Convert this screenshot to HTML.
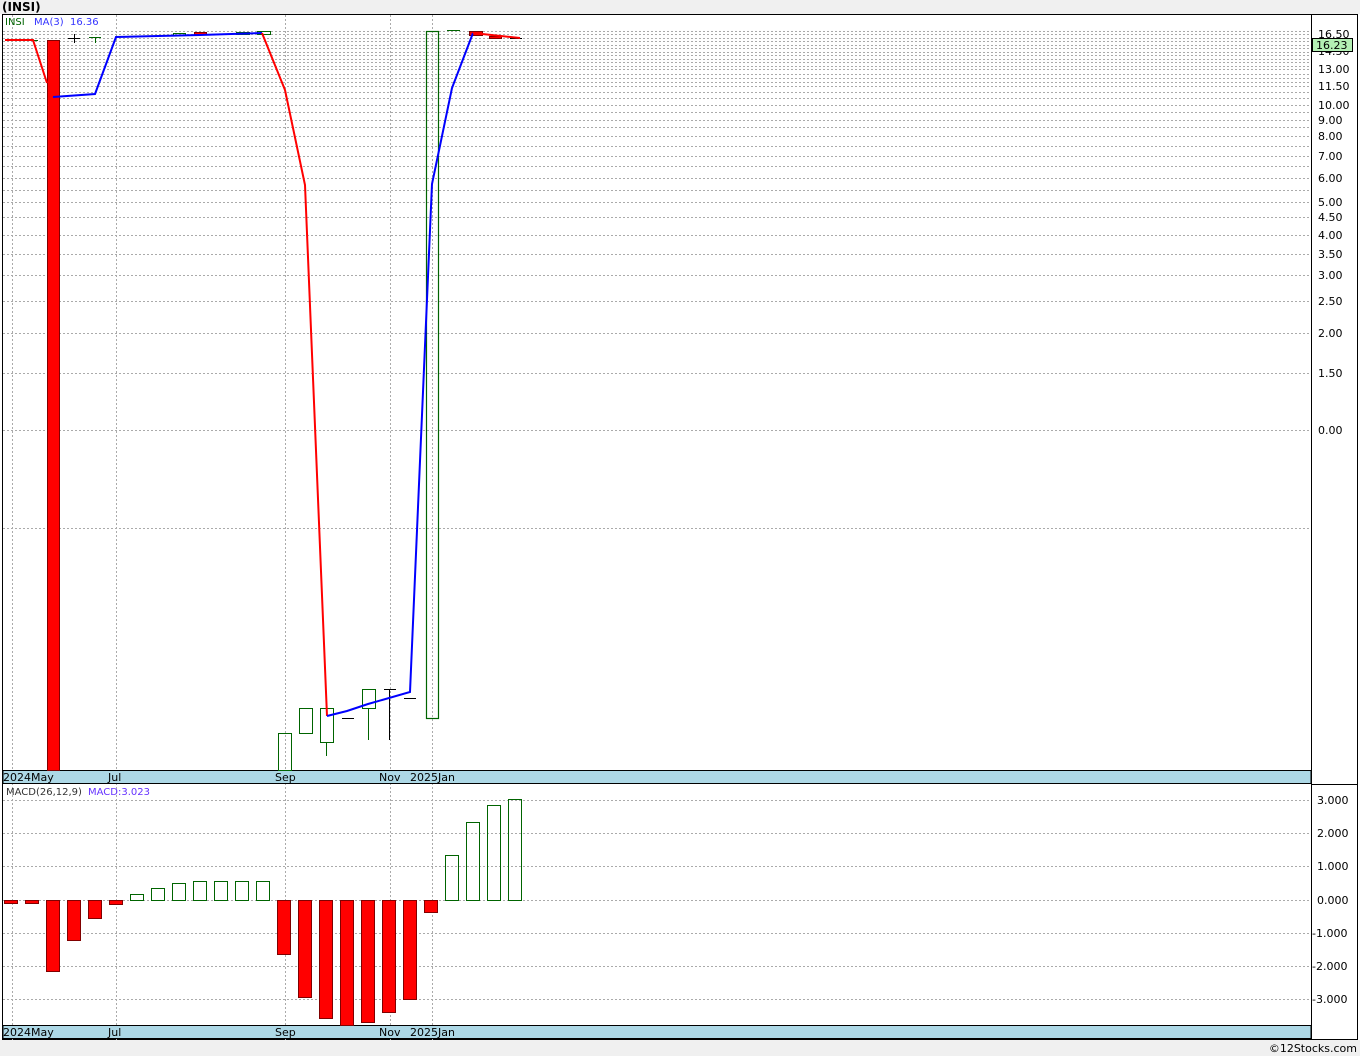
<!DOCTYPE html>
<html><head><meta charset="utf-8"><style>
html,body{margin:0;padding:0;background:#fff;width:1360px;height:1056px;overflow:hidden}
svg{display:block;font-family:"DejaVu Sans","Liberation Sans",sans-serif}
</style></head><body>
<svg width="1360" height="1056" viewBox="0 0 1360 1056" xmlns="http://www.w3.org/2000/svg">
<rect x="0" y="0" width="1360" height="1056" fill="#fff"/>
<rect x="0" y="0" width="1360" height="14" fill="#f0f0f0"/>
<text x="2" y="11" font-size="12" font-weight="bold" fill="#000">(INSI)</text>
<rect x="0" y="1040" width="1360" height="16" fill="#f0f0f0"/>
<text x="1357" y="1052" font-size="11" fill="#000" text-anchor="end">©12Stocks.com</text>
<rect x="2.5" y="14.5" width="1355" height="1025" fill="none" stroke="#000"/>
<line x1="1311.5" y1="14" x2="1311.5" y2="1040" stroke="#000"/>
<g stroke="#aaa" stroke-dasharray="2,2" stroke-width="1">
<line x1="3" x2="1311" y1="31.5" y2="31.5"/><line x1="3" x2="1311" y1="34.5" y2="34.5"/><line x1="3" x2="1311" y1="38.5" y2="38.5"/><line x1="3" x2="1311" y1="41.5" y2="41.5"/><line x1="3" x2="1311" y1="45.5" y2="45.5"/><line x1="3" x2="1311" y1="48.5" y2="48.5"/><line x1="3" x2="1311" y1="52.5" y2="52.5"/><line x1="3" x2="1311" y1="55.5" y2="55.5"/><line x1="3" x2="1311" y1="59.5" y2="59.5"/><line x1="3" x2="1311" y1="62.5" y2="62.5"/><line x1="3" x2="1311" y1="66.5" y2="66.5"/><line x1="3" x2="1311" y1="69.5" y2="69.5"/><line x1="3" x2="1311" y1="74.5" y2="74.5"/><line x1="3" x2="1311" y1="78.5" y2="78.5"/><line x1="3" x2="1311" y1="82.5" y2="82.5"/><line x1="3" x2="1311" y1="86.5" y2="86.5"/><line x1="3" x2="1311" y1="92.5" y2="92.5"/><line x1="3" x2="1311" y1="98.5" y2="98.5"/><line x1="3" x2="1311" y1="105.5" y2="105.5"/><line x1="3" x2="1311" y1="112.5" y2="112.5"/><line x1="3" x2="1311" y1="120.5" y2="120.5"/><line x1="3" x2="1311" y1="127.5" y2="127.5"/><line x1="3" x2="1311" y1="136.5" y2="136.5"/><line x1="3" x2="1311" y1="146.5" y2="146.5"/><line x1="3" x2="1311" y1="156.5" y2="156.5"/><line x1="3" x2="1311" y1="166.5" y2="166.5"/><line x1="3" x2="1311" y1="178.5" y2="178.5"/><line x1="3" x2="1311" y1="190.5" y2="190.5"/><line x1="3" x2="1311" y1="202.5" y2="202.5"/><line x1="3" x2="1311" y1="217.5" y2="217.5"/><line x1="3" x2="1311" y1="235.5" y2="235.5"/><line x1="3" x2="1311" y1="254.5" y2="254.5"/><line x1="3" x2="1311" y1="275.5" y2="275.5"/><line x1="3" x2="1311" y1="301.5" y2="301.5"/><line x1="3" x2="1311" y1="333.5" y2="333.5"/><line x1="3" x2="1311" y1="373.5" y2="373.5"/><line x1="3" x2="1311" y1="430.5" y2="430.5"/><line x1="3" x2="1311" y1="528.5" y2="528.5"/>
<line x1="116.5" x2="116.5" y1="15" y2="1040"/><line x1="285.5" x2="285.5" y1="15" y2="1040"/><line x1="390.5" x2="390.5" y1="15" y2="1040"/><line x1="432.5" x2="432.5" y1="15" y2="1040"/><line x1="12.5" x2="12.5" y1="15" y2="1040"/>
<line x1="3" x2="1311" y1="800.5" y2="800.5"/><line x1="3" x2="1311" y1="833.5" y2="833.5"/><line x1="3" x2="1311" y1="866.5" y2="866.5"/><line x1="3" x2="1311" y1="900.5" y2="900.5"/><line x1="3" x2="1311" y1="933.5" y2="933.5"/><line x1="3" x2="1311" y1="966.5" y2="966.5"/><line x1="3" x2="1311" y1="999.5" y2="999.5"/>
</g>
<g font-size="11" fill="#000">
<text x="1318" y="38">16.50</text><text x="1318" y="55">14.50</text><text x="1318" y="73">13.00</text><text x="1318" y="90">11.50</text><text x="1318" y="109">10.00</text><text x="1318" y="124">9.00</text><text x="1318" y="140">8.00</text><text x="1318" y="160">7.00</text><text x="1318" y="182">6.00</text><text x="1318" y="206">5.00</text><text x="1318" y="221">4.50</text><text x="1318" y="239">4.00</text><text x="1318" y="258">3.50</text><text x="1318" y="279">3.00</text><text x="1318" y="305">2.50</text><text x="1318" y="337">2.00</text><text x="1318" y="377">1.50</text><text x="1318" y="434">0.00</text>
<text x="1317" y="804">3.000</text><text x="1317" y="837">2.000</text><text x="1317" y="870">1.000</text><text x="1317" y="904">0.000</text><text x="1312" y="937">-1.000</text><text x="1312" y="970">-2.000</text><text x="1312" y="1003">-3.000</text>
</g>
<rect x="1312.5" y="38.5" width="40" height="13" fill="#b4f0b4" stroke="#000"/>
<text x="1316" y="49" font-size="11" fill="#000">16.23</text>
<rect x="3" y="770.5" width="1308" height="13" fill="#add8e6" stroke="#000"/>
<rect x="3" y="1025.5" width="1308" height="13" fill="#add8e6" stroke="#000"/>
<line x1="1311" y1="784.5" x2="1358" y2="784.5" stroke="#000"/>
<g font-size="11" fill="#000">
<text x="3" y="781">2024May</text><text x="108" y="781">Jul</text><text x="275" y="781">Sep</text><text x="379" y="781">Nov</text><text x="410" y="781">2025Jan</text>
<text x="3" y="1036">2024May</text><text x="108" y="1036">Jul</text><text x="275" y="1036">Sep</text><text x="379" y="1036">Nov</text><text x="410" y="1036">2025Jan</text>
</g>
<text x="5" y="25" font-size="10" fill="#006400">INSI</text>
<text x="34" y="25" font-size="10" fill="#3333ff">MA(3)</text>
<text x="70" y="25" font-size="10" fill="#3333ff">16.36</text>
<text x="6" y="795" font-size="10" fill="#333">MACD(26,12,9)</text>
<text x="88" y="795" font-size="10" fill="#6633ff">MACD:3.023</text>
<rect x="47.5" y="40.5" width="12" height="730" fill="#f00" stroke="#800000"/>
<g stroke="#006400" fill="none">
<rect x="278.5" y="733.5" width="13" height="37"/>
<rect x="299.5" y="708.5" width="13" height="25"/>
<rect x="320.5" y="708.5" width="13" height="34"/><line x1="326.5" x2="326.5" y1="742" y2="756"/>
<rect x="362.5" y="689.5" width="13" height="19"/><line x1="368.5" x2="368.5" y1="708" y2="740"/>
<rect x="426.5" y="31.5" width="12" height="687" stroke-width="1.2"/>
<line x1="447" x2="460" y1="30.5" y2="30.5"/>
<rect x="173.5" y="33.5" width="12" height="2"/>
<rect x="236.5" y="32.5" width="13" height="2"/>
<rect x="257.5" y="31.5" width="13" height="3"/>
<line x1="16" x2="38" y1="40.5" y2="40.5"/>
<line x1="89" x2="101" y1="37.5" y2="37.5"/><line x1="95.5" x2="95.5" y1="37" y2="43"/>
</g>
<g stroke="#000">
<line x1="342" x2="354" y1="718.5" y2="718.5"/>
<line x1="384" x2="396" y1="689.5" y2="689.5"/><line x1="389.5" x2="389.5" y1="689" y2="740"/>
<line x1="404" x2="416" y1="698.5" y2="698.5"/>
<line x1="68" x2="80" y1="38.5" y2="38.5"/><line x1="74.5" x2="74.5" y1="34" y2="43"/>
<line x1="510" x2="522" y1="38.5" y2="38.5"/>
</g>
<rect x="194.5" y="32.5" width="12" height="2" fill="#f00" stroke="#800000"/>
<rect x="469.5" y="31.5" width="13" height="4" fill="#f00" stroke="#800000"/>
<rect x="489.5" y="36.5" width="12" height="2" fill="#f00" stroke="#800000"/>
<polyline points="5,40 33,40 47,83" fill="none" stroke="#f00" stroke-width="2"/>
<polyline points="53,97 95,94 116,37 200,35 262,33" fill="none" stroke="#00f" stroke-width="2"/>
<polyline points="262,33 285,90 305,185 327,716" fill="none" stroke="#f00" stroke-width="2"/>
<polyline points="327,716 347,711 368,704 410,692 432,184 452,88 473,33" fill="none" stroke="#00f" stroke-width="2"/>
<polyline points="473,33 520,38" fill="none" stroke="#f00" stroke-width="2"/>
<g fill="#f00" stroke="#800000">
<rect x="4.5" y="900.5" width="13" height="3"/>
<rect x="25.5" y="900.5" width="13" height="3"/>
<rect x="46.5" y="900.5" width="13" height="71"/>
<rect x="67.5" y="900.5" width="13" height="40"/>
<rect x="88.5" y="900.5" width="13" height="18"/>
<rect x="109.5" y="900.5" width="13" height="4"/>
<rect x="277.5" y="900.5" width="13" height="54"/>
<rect x="298.5" y="900.5" width="13" height="97"/>
<rect x="319.5" y="900.5" width="13" height="118"/>
<rect x="340.5" y="900.5" width="13" height="125"/>
<rect x="361.5" y="900.5" width="13" height="122"/>
<rect x="382.5" y="900.5" width="13" height="112"/>
<rect x="403.5" y="900.5" width="13" height="99"/>
<rect x="424.5" y="900.5" width="13" height="12"/>
</g>
<g fill="none" stroke="#006400">
<rect x="130.5" y="894.5" width="13" height="6"/>
<rect x="151.5" y="888.5" width="13" height="12"/>
<rect x="172.5" y="883.5" width="13" height="17"/>
<rect x="193.5" y="881.5" width="13" height="19"/>
<rect x="214.5" y="881.5" width="13" height="19"/>
<rect x="235.5" y="881.5" width="13" height="19"/>
<rect x="256.5" y="881.5" width="13" height="19"/>
<rect x="445.5" y="855.5" width="13" height="45"/>
<rect x="466.5" y="822.5" width="13" height="78"/>
<rect x="487.5" y="805.5" width="13" height="95"/>
<rect x="508.5" y="799.5" width="13" height="101"/>
</g>
</svg>
</body></html>
